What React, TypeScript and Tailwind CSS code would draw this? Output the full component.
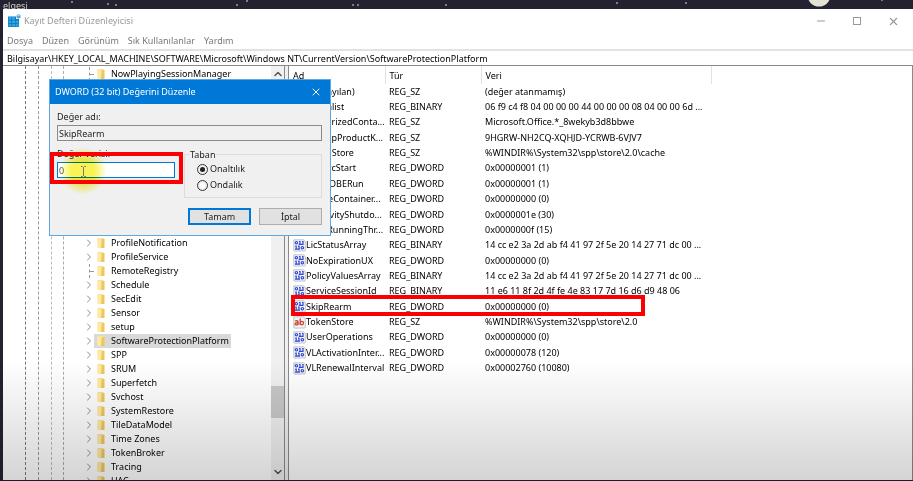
import { useState } from 'react';
import { clsx } from 'clsx';
import { ChevronDown, ChevronRight, ChevronUp, Minus, X } from 'lucide-react';

interface TreeKey { name: string; leaf?: boolean; selected?: boolean; }
interface RegValue { name: string; type: string; data: string; }

const menus = ['Dosya', 'Düzen', 'Görünüm', 'Sık Kullanılanlar', 'Yardım'];

const treeKeys: TreeKey[] = [
  { name: 'ProfileNotification' },
  { name: 'ProfileService' },
  { name: 'RemoteRegistry', leaf: true },
  { name: 'Schedule' },
  { name: 'SecEdit' },
  { name: 'Sensor' },
  { name: 'setup' },
  { name: 'SoftwareProtectionPlatform', selected: true },
  { name: 'SPP' },
  { name: 'SRUM' },
  { name: 'Superfetch' },
  { name: 'Svchost' },
  { name: 'SystemRestore' },
  { name: 'TileDataModel' },
  { name: 'Time Zones' },
  { name: 'TokenBroker' },
  { name: 'Tracing' },
  { name: 'UAC' },
];

const values: RegValue[] = [
  { name: '(Varsayılan)', type: 'REG_SZ', data: '(değer atanmamış)' },
  { name: 'actionlist', type: 'REG_BINARY', data: '06 f9 c4 f8 04 00 00 00 44 00 00 00 08 04 00 00 6d ...' },
  { name: 'AuthorizedConta...', type: 'REG_SZ', data: 'Microsoft.Office.*_8wekyb3d8bbwe' },
  { name: 'BackupProductK...', type: 'REG_SZ', data: '9HGRW-NH2CQ-XQHJD-YCRWB-6VJV7' },
  { name: 'CacheStore', type: 'REG_SZ', data: '%WINDIR%\\System32\\spp\\store\\2.0\\cache' },
  { name: 'ClipSvcStart', type: 'REG_DWORD', data: '0x00000001 (1)' },
  { name: 'HasOOBERun', type: 'REG_DWORD', data: '0x00000001 (1)' },
  { name: 'ImageContainer...', type: 'REG_DWORD', data: '0x00000000 (0)' },
  { name: 'InactivityShutdo...', type: 'REG_DWORD', data: '0x0000001e (30)' },
  { name: 'KeepRunningThr...', type: 'REG_DWORD', data: '0x0000000f (15)' },
  { name: 'LicStatusArray', type: 'REG_BINARY', data: '14 cc e2 3a 2d ab f4 41 97 2f 5e 20 14 27 71 dc 00 ...' },
  { name: 'NoExpirationUX', type: 'REG_DWORD', data: '0x00000000 (0)' },
  { name: 'PolicyValuesArray', type: 'REG_BINARY', data: '14 cc e2 3a 2d ab f4 41 97 2f 5e 20 14 27 71 dc 00 ...' },
  { name: 'ServiceSessionId', type: 'REG_BINARY', data: '11 e6 11 8f 2d 4f fe 4e 83 17 7d 16 d6 d9 48 06' },
  { name: 'SkipRearm', type: 'REG_DWORD', data: '0x00000000 (0)' },
  { name: 'TokenStore', type: 'REG_SZ', data: '%WINDIR%\\System32\\spp\\store\\2.0' },
  { name: 'UserOperations', type: 'REG_DWORD', data: '0x00000000 (0)' },
  { name: 'VLActivationInter...', type: 'REG_DWORD', data: '0x00000078 (120)' },
  { name: 'VLRenewalInterval', type: 'REG_DWORD', data: '0x00002760 (10080)' },
];

function RegeditIcon() {
  return (
    <svg width="13" height="14" viewBox="0 0 13 14" aria-hidden="true">
      <path d="M0 2.500h8v2.500h3v8H0z" fill="#0f77bd" />
      <path d="M.5 3h2.800v2.800H.5zM4 3h3v2.800H4zM.5 6.500h2.800v2.800H.5zM4 6.500h3v2.800H4zM7.600 6.500h3v2.800h-3zM.5 10h2.800v2.600H.5zM4 10h3v2.600H4zM7.600 10h3v2.600h-3z" fill="#2ba6e3" />
      <path d="M8.500 1.500l2-1.500 2 1.300v2.200l-2 1.300-2-1.200z" fill="#4f9fcf" />
      <path d="M8.500 1.500l2 1 2-1.200-2-1.300z" fill="#9dd5f3" />
    </svg>
  );
}

function FolderIcon() {
  return (
    <svg width="8" height="12" viewBox="0 0 8 12" className="shrink-0" aria-hidden="true">
      <path d="M0.500 1h6v9.500h-6z" fill="#fbe093" />
      <path d="M5 2h2.500v9H4z" fill="#efc658" />
      <path d="M0.500 1L3.500 2.500V11.500L0.500 10.500z" fill="#ffe9a9" />
    </svg>
  );
}

function ValueIcon({ text }: { text: boolean }) {
  return (
    <svg width="13" height="13" viewBox="0 0 13 13" className="shrink-0" aria-hidden="true">
      <path d="M.8 .8h9.700l1.800 1.700v9l-1.300.8-2-.6-2 .6-2-.4-2 .4-2.200-.6z" fill="#f1f3fb" stroke="#b3b5bf" strokeWidth="0.8" />
      {text ? (
        <g fill="none" stroke="#d2452c" strokeWidth="1.300">
          <path d="M2.200 5.200c1-.8 2.800-.6 2.800.6V9M5 6.800c-1.400-.2-3 .1-3 1.200s2 1.400 3 0" />
          <path d="M7.200 2.500V9" />
          <ellipse cx="8.900" cy="7.100" rx="1.600" ry="1.700" />
        </g>
      ) : (
        <g fill="none" stroke="#3249cf" strokeWidth="1.200">
          <ellipse cx="3.400" cy="3.700" rx="1.200" ry="1.200" />
          <path d="M6 2.500h1v3M9 2.500h1v3M5.800 5.400h4.800" />
          <path d="M2.200 7.200h1v3M5 7.200h1v3M2 10.200h5" />
          <ellipse cx="9.400" cy="8.700" rx="1.200" ry="1.200" />
        </g>
      )}
    </svg>
  );
}

function TreeRow({ name, leaf, selected }: TreeKey) {
  return (
    <li className="flex h-[14px] items-center pl-[80px]">
      <span className="flex w-[11px] shrink-0 text-[#8a8a8a]">
        {leaf ? (
          <span className="ml-[6px] flex h-[14px] w-[5px] items-center border-l border-dashed border-[#999]">
            <i className="w-full border-t border-dashed border-[#999]" />
          </span>
        ) : <ChevronRight size={12} strokeWidth={2} className="shrink-0" />}
      </span>
      <span className={clsx('flex h-[14px] items-center gap-[6px] pr-[2px] pl-[3px] whitespace-nowrap', selected && 'bg-[#d9d9d9]')}>
        <FolderIcon />
        {name}
      </span>
    </li>
  );
}

function KeyTree() {
  return (
    <nav aria-label="Anahtarlar" className="relative flex w-[282px] shrink-0 overflow-hidden border-r border-[#8a8a8a]">
      <div className="flex shrink-0 pl-[22px]">
        <i className="w-[13px] border-l border-dashed border-[#777]" />
        <i className="w-[13px] border-l border-dashed border-[#999]" />
        <i className="w-3 border-l border-dashed border-[#bbb]" />
        <i className="border-l border-dashed border-[#aaa]" />
      </div>
      <ul className="-ml-[61px] min-w-0 flex-1 pt-px">
        <TreeRow name="NowPlayingSessionManager" leaf />
        <li className="h-[155px]" aria-hidden="true" />
        {treeKeys.map(k => <TreeRow key={k.name} {...k} />)}
      </ul>
      <div className="flex w-[13px] shrink-0 flex-col items-center bg-[#f0f0f0] py-[2px] text-[#555]">
        <ChevronUp size={12} strokeWidth={3} />
        <div className="flex-[77]" />
        <div className="w-full flex-[8] bg-[#c8c8c8]" />
        <div className="flex-[12]" />
        <ChevronDown size={12} strokeWidth={3} />
      </div>
    </nav>
  );
}

function ValueList() {
  return (
    <div className="min-w-0 flex-1 overflow-hidden border-r border-l border-[#8a8a8a]">
      <table className="h-[310px] w-[423px] table-fixed border-collapse text-left whitespace-nowrap">
        <thead>
          <tr className="h-[18px]">
            <th className="w-[96px] border-r border-[#e2e2e2] p-0 pt-[2px] pl-1 font-normal">Ad</th>
            <th className="w-[96px] border-r border-[#e2e2e2] p-0 pt-[2px] pl-1 font-normal">Tür</th>
            <th className="border-r border-[#e2e2e2] p-0 pt-[2px] pl-1 font-normal">Veri</th>
          </tr>
        </thead>
        <tbody>
          {values.map(v => (
            <tr key={v.name} className="leading-3">
              <td className="p-0 pl-1">
                <span className="flex items-center">
                  <ValueIcon text={v.type === 'REG_SZ'} />
                  {v.name}
                </span>
              </td>
              <td className="p-0 pl-1">{v.type}</td>
              <td className="p-0 pl-1">{v.data}</td>
            </tr>
          ))}
        </tbody>
      </table>
    </div>
  );
}

function EditDialog() {
  const [data, setData] = useState('0');
  const [base, setBase] = useState('hex');

  return (
    <section role="dialog" aria-label="DWORD (32 bit) Değerini Düzenle"
      className="absolute top-[79px] left-[49px] w-[282px] border border-[#5aa9e6] bg-[#f0f0f0] pb-[10px] leading-3 text-[#222]">
      <header className="flex h-6 items-center justify-between bg-[#0078d7] pr-2 pl-[5px] text-white">
        <h2>DWORD (32 bit) Değerini Düzenle</h2>
        <button aria-label="Kapat"><X size={12} strokeWidth={2} /></button>
      </header>
      <div className="pt-[7px] pr-2 pl-[7px]">
        <label htmlFor="value-name" className="block">Değer adı:</label>
        <input id="value-name" readOnly value="SkipRearm"
          className="mt-[2px] block h-4 w-full border border-[#8a8a8a] bg-[#f0f0f0] px-px" />
        <div className="mt-[7px] flex justify-between">
          <div className="w-[118px]">
            <label htmlFor="value-data" className="block">Değer verisi:</label>
            <input id="value-data" value={data} onChange={e => setData(e.target.value)}
              className="mt-[2px] block h-4 w-full border border-[#0078d7] bg-white px-px text-[#555] outline-none" />
          </div>
          <fieldset className="relative mt-[6px] flex h-[44px] w-[138px] flex-col gap-1 border border-[#dcdcdc] pt-2 pl-3">
            <legend className="absolute -top-[6px] left-1 bg-[#f0f0f0] px-px">Taban</legend>
            {[
              { id: 'hex', label: 'Onaltılık' },
              { id: 'dec', label: 'Ondalık' },
            ].map(({ id, label }) => (
              <label key={id} className="flex items-center gap-[2px]">
                <input type="radio" name="base" checked={base === id} onChange={() => setBase(id)}
                  className="size-[11px] appearance-none rounded-full border border-[#333] bg-white bg-clip-content p-[2px] checked:bg-[#222]" />
                {label}
              </label>
            ))}
          </fieldset>
        </div>
        <div className="mt-[10px] flex justify-end gap-2">
          <button className="h-[17px] w-[63px] border-2 border-[#0078d7] bg-[#e1e1e1]">Tamam</button>
          <button className="h-[17px] w-[63px] border border-[#adadad] bg-[#e1e1e1]">İptal</button>
        </div>
      </div>
    </section>
  );
}

export default function App() {
  return (
    <div className="relative flex h-screen flex-col overflow-hidden bg-[#24222f] pb-px pl-[3px] font-['Noto_Sans','Open_Sans',sans-serif] text-[9px] text-black">
      {/* Desktop strip */}
      <div className="relative h-[9px] shrink-0 leading-[11px] text-[#ccc]">
        elgesi
        <svg className="absolute inset-0 size-full" aria-hidden="true">
          <g fill="#7ba3c9">
            <circle cx="69" cy="2" r="1" /><circle cx="105" cy="4" r="1" /><circle cx="113" cy="5" r="1" />
            <circle cx="234" cy="5" r="1" /><circle cx="244" cy="1" r="1" /><circle cx="350" cy="5" r="1" />
            <circle cx="355" cy="5" r="1" /><circle cx="443" cy="5" r="1" /><circle cx="614" cy="3" r="1" />
            <circle cx="683" cy="3" r="1" /><circle cx="879" cy="0" r="1" />
          </g>
          <circle cx="816" cy="-5" r="11.500" fill="#e4e3d3" />
        </svg>
      </div>

      {/* Registry editor window */}
      <main className="relative flex min-h-0 flex-1 flex-col bg-white">
        <header className="flex h-6 shrink-0 items-center gap-[3px] pl-[5px] text-[#999]">
          <RegeditIcon />
          <h1 className="flex-1">Kayıt Defteri Düzenleyicisi</h1>
          <div className="flex items-center gap-[26px] pr-[13px]">
            <button aria-label="Simge durumuna küçült"><Minus size={12} strokeWidth={2} /></button>
            <button aria-label="Ekranı kapla" className="size-2 border border-[#999]" />
            <button aria-label="Kapat"><X size={13} strokeWidth={2} /></button>
          </div>
        </header>
        <nav className="flex h-4 shrink-0 items-center gap-[9px] pl-1 text-[#777]">
          {menus.map(m => <button key={m}>{m}</button>)}
        </nav>
        <input aria-label="Adres" readOnly
          value="Bilgisayar\HKEY_LOCAL_MACHINE\SOFTWARE\Microsoft\Windows NT\CurrentVersion\SoftwareProtectionPlatform"
          className="h-[17px] w-full shrink-0 border-t-2 border-b border-t-[#e2e2e2] border-b-[#8a8a8a] px-1 outline-none" />
        <div className="flex min-h-0 flex-1 gap-[3px] bg-[#f0f0f0] *:bg-white">
          <KeyTree />
          <ValueList />
        </div>
      </main>

      <EditDialog />

      {/* Annotations */}
      <div className="pointer-events-none absolute top-[147px] left-[59px] size-12 rounded-full bg-[radial-gradient(circle,#f7f02acc_35%,#f7f02a00_70%)] mix-blend-multiply" />
      <svg className="pointer-events-none absolute top-[166px] left-[80px]" width="7" height="11" viewBox="0 0 7 11" fill="none" stroke="#777" aria-hidden="true">
        <path d="M1 .5h1.500l1 1 1-1H6M3.500 1.500v8M1 10.500h1.500l1-1 1 1H6" />
      </svg>
      <div className="pointer-events-none absolute top-[152px] left-[50px] h-[32px] w-[133px] border-4 border-[#fb0000]" />
      <div className="pointer-events-none absolute top-[295px] left-[291px] h-[21px] w-[354px] border-4 border-[#fb0000]" />
      <div className="pointer-events-none absolute inset-x-0 bottom-0 h-[120px] bg-linear-to-t from-black/17 to-transparent" />
    </div>
  );
}
